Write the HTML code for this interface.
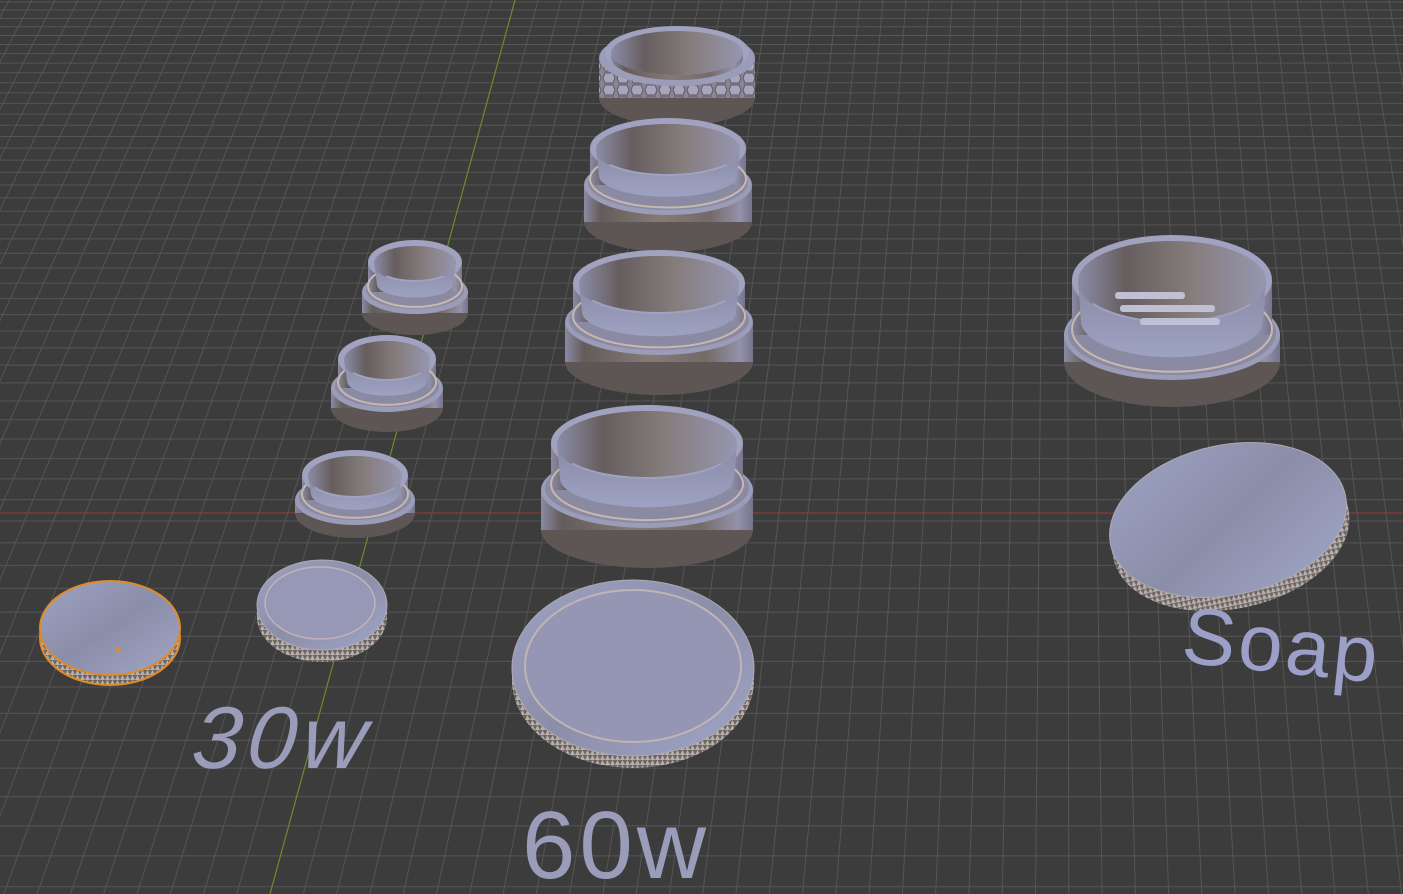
<!DOCTYPE html>
<html><head><meta charset="utf-8"><style>
html,body{margin:0;padding:0;background:#3c3c3c;overflow:hidden}
svg{display:block}
text{font-family:"Liberation Sans",sans-serif}
</style></head><body>
<svg id="s" width="1403" height="894" viewBox="0 0 1403 894" xmlns="http://www.w3.org/2000/svg">
<defs>
<linearGradient id="body" x1="0" x2="1" y1="0" y2="0">
<stop offset="0" stop-color="#8a8aa4"/><stop offset="0.1" stop-color="#645c5a"/><stop offset="0.45" stop-color="#857a76"/><stop offset="0.75" stop-color="#736a68"/><stop offset="0.93" stop-color="#9492aa"/><stop offset="1" stop-color="#76748c"/>
</linearGradient>
<linearGradient id="wall" x1="0" x2="1" y1="0" y2="0">
<stop offset="0" stop-color="#8c8ca8"/><stop offset="0.25" stop-color="#665e5e"/><stop offset="0.6" stop-color="#857c7c"/><stop offset="1" stop-color="#9696b0"/>
</linearGradient>
<linearGradient id="floor" x1="0" x2="0" y1="0" y2="1">
<stop offset="0" stop-color="#8a8ca6"/><stop offset="1" stop-color="#9ea2c2"/>
</linearGradient>
<linearGradient id="lid" x1="0" x2="1" y1="0" y2="1">
<stop offset="0" stop-color="#9ea2c4"/><stop offset="0.5" stop-color="#8a8ea8"/><stop offset="1" stop-color="#a2a6c8"/>
</linearGradient>
<pattern id="knurl" width="5" height="5" patternUnits="userSpaceOnUse">
<rect width="5" height="5" fill="#6e6660"/><path d="M0 5 L2.5 0 L5 5Z" fill="#b8b0b0"/>
</pattern>
<pattern id="hex" width="14" height="12" patternUnits="userSpaceOnUse">
<rect width="14" height="12" fill="#8a8494"/><path d="M3 1 L11 1 L13 6 L11 11 L3 11 L1 6Z" fill="#a8a6bc" stroke="#5e5860" stroke-width="1"/>
</pattern>
</defs>
<g id="grid"></g>
<line x1="0" y1="513" x2="1403" y2="513" stroke="#8a3a3a" stroke-width="1.2"/>
<line x1="515" y1="0" x2="270" y2="894" stroke="#6a8a2a" stroke-width="1.2"/>
<g id="objs"></g>
<text x="190" y="768" font-size="88" font-style="italic" fill="#9a9cba" letter-spacing="6" transform="skewX(-6)" style="transform-origin:190px 768px">30w</text>
<text x="522" y="878" font-size="96" fill="#9a9cba" letter-spacing="4">60w</text>
<text x="1180" y="662" font-size="80" fill="#9ca0c8" letter-spacing="3" transform="rotate(6 1180 662)">Soap</text>
</svg>
<script>
var NS="http://www.w3.org/2000/svg";
var g=document.getElementById('grid'),o=document.getElementById('objs');
function el(p,tag,a){var e=document.createElementNS(NS,tag);for(var k in a)e.setAttribute(k,a[k]);p.appendChild(e);return e;}
var y=2;while(y<900){el(g,'line',{x1:0,y1:y,x2:1403,y2:y,stroke:'#555','stroke-width':1});y+=8*(1+y/300);}
var vx=1063,vy=-2000,f=(894-vy)/(0-vy);
for(var i=-60;i<60;i++){var x0=515+i*23;var x1=vx+(x0-vx)*f;
el(g,'line',{x1:x0,y1:0,x2:x1,y2:894,stroke:'#555','stroke-width':1});}
function jar(cx,ct,rx,ry,cl,cb,tr){
 el(o,'ellipse',{cx:cx,cy:cb,rx:rx,ry:ry,fill:'#5e5654'});
 el(o,'rect',{x:cx-rx,y:cl,width:2*rx,height:cb-cl,fill:'url(#body)'});
 el(o,'ellipse',{cx:cx,cy:cl,rx:rx,ry:ry,fill:'#9a9cb8'});
 el(o,'ellipse',{cx:cx,cy:cl-2,rx:rx-4,ry:ry-3,fill:'#8a8aa2'});
 el(o,'rect',{x:cx-tr,y:ct,width:2*tr,height:cl-ct,fill:'url(#body)'});
 el(o,'ellipse',{cx:cx,cy:cl-6,rx:tr,ry:ry*0.95,fill:'none',stroke:'#c8b8b0','stroke-width':2});
 el(o,'ellipse',{cx:cx,cy:ct,rx:tr,ry:ry,fill:'#a0a2c0'});
 var fy=ct+(cl-ct)*0.75, fr=ry-9;
 el(o,'ellipse',{cx:cx,cy:ct+1,rx:tr-6,ry:ry-5,fill:'url(#wall)'});
 var p='M'+(cx-tr+6)+' '+(ct+1)+' A'+(tr-6)+' '+(ry-5)+' 0 0 1 '+(cx+tr-6)+' '+(ct+1)+' L'+(cx+tr-9)+' '+fy+' A'+(tr-9)+' '+fr+' 0 0 0 '+(cx-tr+9)+' '+fy+'Z';
 el(o,'path',{d:p,fill:'url(#wall)'});
 el(o,'path',{d:'M'+(cx-tr+9)+' '+fy+' A'+(tr-9)+' '+fr+' 0 0 0 '+(cx+tr-9)+' '+fy+' L'+(cx+tr-7)+' '+(ct+4)+' A'+(tr-7)+' '+(ry-6)+' 0 0 1 '+(cx-tr+7)+' '+(ct+4)+'Z',fill:'url(#floor)'});
}
function lid(cx,cy,rx,ry,th,stroke,rot){
 var gg=el(o,'g',rot?{transform:'rotate('+rot+' '+cx+' '+cy+')'}:{});
 el(gg,'ellipse',{cx:cx,cy:cy+th,rx:rx,ry:ry,fill:'url(#knurl)',stroke:stroke||'none','stroke-width':2});
 el(gg,'rect',{x:cx-rx,y:cy,width:2*rx,height:th,fill:'url(#knurl)'});
 el(gg,'ellipse',{cx:cx,cy:cy,rx:rx,ry:ry,fill:'url(#lid)',stroke:stroke||'#b0a8b0','stroke-width':stroke?2:1});
 return gg;
}
el(o,'ellipse',{cx:677,cy:98,rx:78,ry:28,fill:'#5e5654'});
el(o,'rect',{x:599,y:58,width:156,height:40,fill:'url(#hex)'});
el(o,'ellipse',{cx:677,cy:58,rx:78,ry:28,fill:'#9a9cb8'});
el(o,'ellipse',{cx:677,cy:52,rx:72,ry:26,fill:'#a0a2c0'});
el(o,'ellipse',{cx:677,cy:53,rx:66,ry:22,fill:'url(#wall)'});
el(o,'path',{d:'M611 53 A66 22 0 0 0 743 53 L743 58 A66 22 0 0 1 611 58Z',fill:'url(#body)'});
jar(668,148,84,30,185,222,78);
jar(659,283,94,33,322,362,86);
jar(647,443,106,38,490,530,96);
lid(633,668,121,88,12);
el(o,'ellipse',{cx:633,cy:666,rx:108,ry:76,fill:'#9496b4',stroke:'#c0b4b4','stroke-width':2});
jar(415,262,53,22,292,313,47);
jar(387,359,56,24,388,408,49);
jar(355,475,60,25,500,513,53);
lid(322,605,65,45,12);
el(o,'ellipse',{cx:320,cy:603,rx:55,ry:36,fill:'#9698b6',stroke:'#c0b4b4','stroke-width':1.5});
lid(110,628,70,47,10,'#e08a2a');
el(o,'circle',{cx:118,cy:650,r:2.5,fill:'#e08a2a'});
jar(1172,280,108,45,335,362,100);
el(o,'rect',{x:1115,y:292,width:70,height:7,rx:3,fill:'#c0c0d4'});
el(o,'rect',{x:1120,y:305,width:95,height:7,rx:3,fill:'#c0c0d4'});
el(o,'rect',{x:1140,y:318,width:80,height:7,rx:3,fill:'#c0c0d4'});
lid(1228,520,120,75,14,null,-12);
</script>
</body></html>
